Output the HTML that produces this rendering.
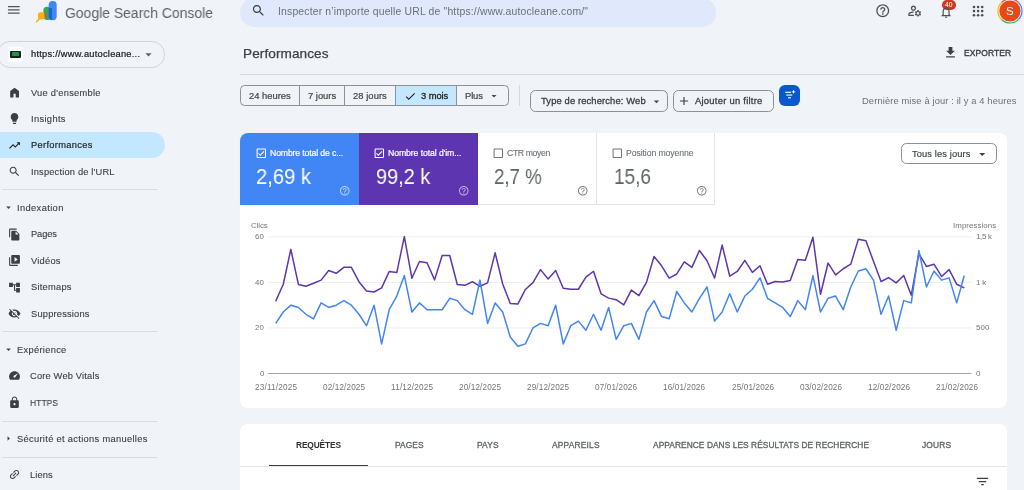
<!DOCTYPE html>
<html lang="fr"><head><meta charset="utf-8"><title>Performances</title>
<style>
html,body{margin:0;padding:0}
html{width:1024px;height:490px;overflow:hidden;background:#f0f4f9}
body{width:1024px;height:490px;overflow:hidden;position:relative;background:#f0f4f9;font-family:"Liberation Sans", sans-serif;}
.t{position:absolute;white-space:pre;will-change:transform;}
.i{position:absolute;display:block;overflow:visible}
.b{position:absolute;box-sizing:border-box}
</style></head><body>

<!-- header -->
<div class="b" style="left:240px;top:-1.6px;width:476px;height:28.3px;border-radius:14.1px;background:#e0e9fb"></div>
<!-- GSC logo -->
<svg class="i" style="left:35px;top:0;width:24px;height:24px" viewBox="0 0 24 24">
<rect x="8.400" y="6.800" width="8" height="13.100" rx="3.600" fill="#34a853"/>
<rect x="13.700" y="1" width="8" height="19.200" rx="3.900" fill="#4285f4"/>
<path d="M13.700 8v8.300a3.900 3.900 0 0 0 3.300 3.850V8z" fill="#1a66d9"/>
<rect x="7.600" y="12.800" width="3.400" height="5.400" rx="1.500" fill="#ea4335"/>
<line x1="1.500" y1="21.700" x2="4.300" y2="18.900" stroke="#fbb216" stroke-width="1.500" stroke-linecap="round"/>
<rect x="2.900" y="12.300" width="6.600" height="7.300" rx="2.700" fill="#fbb216"/>
</svg>
<!-- apps grid -->
<svg class="i" style="left:972.4px;top:4.6px;width:12.2px;height:12.2px" viewBox="0 0 14 14"><g fill="#4d5156">
<circle cx="2.3" cy="2.3" r="1.5"/><circle cx="7" cy="2.3" r="1.5"/><circle cx="11.7" cy="2.3" r="1.5"/>
<circle cx="2.3" cy="7" r="1.5"/><circle cx="7" cy="7" r="1.5"/><circle cx="11.7" cy="7" r="1.5"/>
<circle cx="2.3" cy="11.7" r="1.5"/><circle cx="7" cy="11.7" r="1.5"/><circle cx="11.7" cy="11.7" r="1.5"/></g></svg>
<!-- bell badge -->
<div class="b" style="left:942.1px;top:0.4px;width:14.1px;height:9.4px;border-radius:4.7px;background:#cf3a1f"></div>
<span class="t" style="left:945.3px;top:1.1px;font-size:6.8px;line-height:8px;color:#fff;letter-spacing:-0.1px">40</span>
<!-- avatar -->
<svg class="i" style="left:996.8px;top:-2.2px;width:26px;height:26px" viewBox="0 0 26 26">
<path d="M4.510 4.510 A12 12 0 0 1 21.490 4.510" fill="none" stroke="#ea4335" stroke-width="1.200"/>
<path d="M21.490 4.510 A12 12 0 0 1 21.490 21.490" fill="none" stroke="#4285f4" stroke-width="1.200"/>
<path d="M21.490 21.490 A12 12 0 0 1 4.510 21.490" fill="none" stroke="#34a853" stroke-width="1.200"/>
<path d="M4.510 21.490 A12 12 0 0 1 4.510 4.510" fill="none" stroke="#fbbc04" stroke-width="1.200"/>
<circle cx="13" cy="13" r="10.6" fill="#e64a19"/>
</svg>
<span class="t" style="left:1005.9px;top:4.5px;font-size:11.5px;line-height:13px;color:#fff">S</span>

<!-- property selector -->
<div class="b" style="left:-3.5px;top:41px;width:168.4px;height:26.5px;border-radius:13.25px;border:1px solid #d0d4d9"></div>
<div class="b" style="left:7.5px;top:46.5px;width:15px;height:15px;background:#fff;border-radius:1px"></div>
<div class="b" style="left:10px;top:50.6px;width:10.5px;height:7px;background:#0d2a16;border-radius:1px"></div>
<div class="b" style="left:12px;top:52.3px;width:6.5px;height:3.4px;background:#2e8b4a;border-radius:.5px"></div>

<!-- nav -->
<div class="b" style="left:-14px;top:132px;width:179px;height:26.2px;border-radius:13.1px;background:#c2e7ff"></div>
<div class="b" style="left:1.5px;top:189.3px;width:155.5px;height:1px;background:#d9dde2"></div>
<div class="b" style="left:1.5px;top:331.3px;width:155.5px;height:1px;background:#d9dde2"></div>
<div class="b" style="left:1.5px;top:420.5px;width:155.5px;height:1px;background:#d9dde2"></div>
<div class="b" style="left:1.5px;top:456.6px;width:155.5px;height:1px;background:#d9dde2"></div>
<!-- core web vitals gauge -->
<svg class="i" style="left:7.8px;top:369.1px;width:13px;height:13px" viewBox="0 0 24 24">
<path fill="#3c4043" d="M12 4C6.480 4 2 8.480 2 14c0 1.800.500 3.500 1.350 5 .350.600 1 1 1.700 1h13.900c.700 0 1.350-.400 1.700-1 .850-1.500 1.350-3.200 1.350-5 0-5.520-4.480-10-10-10z"/>
<path fill="#f0f4f9" d="M10.600 15.400a2 2 0 0 0 2.830 0l5.100-7.600-7.930 4.770a2 2 0 0 0 0 2.830z"/>
</svg>

<!-- title row -->
<div class="b" style="left:240px;top:74px;width:784px;height:1px;background:#d5d9de"></div>

<!-- date chips -->
<div class="b" style="left:240.3px;top:85.3px;width:268.4px;height:20.8px;border:1px solid #8d9196;border-radius:4.5px;overflow:hidden">
 <div class="b" style="left:153.8px;top:-1px;width:61.5px;height:21px;background:#c2e7ff"></div>
 <div class="b" style="left:57.5px;top:-1px;width:1px;height:21px;background:#8d9196"></div>
 <div class="b" style="left:102.5px;top:-1px;width:1px;height:21px;background:#8d9196"></div>
 <div class="b" style="left:153.5px;top:-1px;width:1px;height:21px;background:#8d9196"></div>
 <div class="b" style="left:214.5px;top:-1px;width:1px;height:21px;background:#8d9196"></div>
</div>
<div class="b" style="left:519px;top:85px;width:1px;height:21px;background:#d5d9de"></div>
<div class="b" style="left:530.2px;top:90.3px;width:137.4px;height:21.7px;border:1px solid #8d9196;border-radius:5.5px"></div>
<div class="b" style="left:673.2px;top:90.3px;width:100.6px;height:21.7px;border:1px solid #8d9196;border-radius:5.5px"></div>
<div class="b" style="left:779.3px;top:85px;width:21px;height:21.2px;border-radius:6px;background:#0b57d0"></div>
<svg class="i" style="left:783.9px;top:89.3px;width:12px;height:12px" viewBox="0 0 24 24"><g fill="#fff">
<rect x="2.500" y="5.500" width="11.5" height="2.200"/><rect x="4.500" y="11" width="12" height="2.200"/><rect x="8" y="16.500" width="6" height="2.200"/>
<path d="M19 1.500l1.300 2.900 2.900 1.300-2.900 1.300L19 9.900l-1.300-2.900-2.900-1.300 2.900-1.300z"/></g></svg>

<!-- card 1 -->
<div class="b" style="left:240.300px;top:132.600px;width:766.7px;height:275.5px;border-radius:8px;background:#fff;overflow:hidden">
 <div class="b" style="left:0;top:0;width:118.7px;height:72.100px;background:#4285f4"></div>
 <div class="b" style="left:118.7px;top:0;width:118.7px;height:72.100px;background:#5e35b1"></div>
 <div class="b" style="left:237.400px;top:0;width:119.3px;height:72.100px;border-right:1px solid #e3e5e8;border-bottom:1px solid #e3e5e8"></div>
 <div class="b" style="left:356.700px;top:0;width:117.7px;height:72.100px;border-right:1px solid #e3e5e8;border-bottom:1px solid #e3e5e8"></div>
</div>
<div class="b" style="left:900.6px;top:143.1px;width:96px;height:21.1px;border:1px solid #8a8f94;border-radius:5.5px;background:#fff"></div>

<!-- card 2 -->
<div class="b" style="left:240.300px;top:424px;width:766.7px;height:66px;border-radius:8px 8px 0 0;background:#fff"></div>
<div class="b" style="left:240.300px;top:466px;width:766.7px;height:1px;background:#e3e5e8"></div>
<div class="b" style="left:269px;top:464.5px;width:99px;height:1.4px;background:#3c4043"></div>

<svg class="i" style="left:0;top:0;width:1024px;height:490px" viewBox="0 0 1024 490">
<g stroke="#eeeeee" stroke-width="1"><line x1="268" x2="971.5" y1="236.85" y2="236.85"/><line x1="268" x2="971.5" y1="282.4" y2="282.4"/><line x1="268" x2="971.5" y1="327.95" y2="327.95"/></g>
<line x1="268" x2="971.5" y1="373.5" y2="373.5" stroke="#a6a6a6" stroke-width="1"/>
<polyline fill="none" stroke="#5e35b1" stroke-width="1.5" stroke-linejoin="round" points="275.70,301.30 283.27,284.22 290.83,249.38 298.40,284.45 305.97,286.27 313.53,283.31 321.10,280.12 328.67,270.56 336.23,273.29 343.80,267.37 351.37,267.37 358.93,281.72 366.50,291.05 374.07,291.97 381.63,287.87 389.20,271.47 396.77,272.61 404.33,236.62 411.90,278.30 419.47,261.45 427.03,262.81 434.60,279.89 442.17,255.53 449.73,255.53 457.30,284.45 464.87,285.36 472.43,281.72 480.00,286.27 487.57,282.86 495.13,252.79 502.70,283.99 510.27,303.58 517.83,304.04 525.40,289.46 532.97,282.63 540.53,269.65 548.10,278.98 555.67,270.56 563.23,288.32 570.80,289.23 578.37,289.23 585.93,277.16 593.50,271.24 601.07,293.79 608.63,298.11 616.20,299.71 623.77,304.95 631.33,290.14 638.90,295.61 646.47,282.40 654.03,256.44 661.60,265.77 669.17,278.07 676.74,273.97 684.30,261.90 691.87,267.37 699.44,250.52 707.00,260.76 714.57,278.07 722.14,245.05 729.70,276.02 737.27,271.47 744.84,260.31 752.40,272.38 759.97,265.77 767.54,284.22 775.10,281.49 782.67,281.94 790.24,280.58 797.80,259.40 805.37,260.31 812.94,237.31 820.50,294.24 828.07,263.04 835.64,274.88 843.20,268.74 850.77,264.18 858.34,239.36 865.90,240.72 873.47,261.22 881.04,281.49 888.60,277.62 896.17,282.86 903.74,275.57 911.30,295.15 918.87,253.70 926.44,266.46 934.00,264.18 941.57,276.48 949.14,269.65 956.70,284.22 964.27,287.87"/>
<polyline fill="none" stroke="#4285f4" stroke-width="1.5" stroke-linejoin="round" points="275.70,323.39 283.27,312.01 290.83,305.18 298.40,307.45 305.97,314.29 313.53,318.84 321.10,302.90 328.67,307.45 336.23,305.18 343.80,300.62 351.37,305.18 358.93,314.29 366.50,325.67 374.07,305.18 381.63,343.89 389.20,309.73 396.77,296.06 404.33,275.57 411.90,312.01 419.47,302.90 427.03,309.73 434.60,309.73 442.17,309.73 449.73,298.34 457.30,300.62 464.87,309.73 472.43,314.29 480.00,280.12 487.57,323.39 495.13,302.90 502.70,312.01 510.27,337.06 517.83,346.17 525.40,343.89 532.97,327.95 540.53,323.39 548.10,325.67 555.67,305.18 563.23,343.89 570.80,325.67 578.37,321.12 585.93,330.23 593.50,314.29 601.07,330.23 608.63,307.45 616.20,339.34 623.77,325.67 631.33,323.39 638.90,339.34 646.47,312.01 654.03,300.62 661.60,316.56 669.17,318.84 676.74,291.51 684.30,302.90 691.87,312.01 699.44,298.34 707.00,286.96 714.57,321.12 722.14,312.01 729.70,293.79 737.27,312.01 744.84,296.06 752.40,289.23 759.97,277.85 767.54,298.34 775.10,302.90 782.67,307.45 790.24,316.56 797.80,300.62 805.37,309.73 812.94,275.57 820.50,312.01 828.07,298.34 835.64,296.06 843.20,309.73 850.77,286.96 858.34,271.01 865.90,268.74 873.47,280.12 881.04,314.29 888.60,296.06 896.17,330.23 903.74,300.62 911.30,302.90 918.87,250.52 926.44,286.96 934.00,271.01 941.57,280.12 949.14,277.85 956.70,302.90 964.27,275.57"/>
</svg>
<svg class="i" style="left:6.2px;top:2.3px;width:15.6px;height:15.6px;" viewBox="0 0 24 24"><path fill="#50545a" d="M3 18h18v-2H3v2zm0-5h18v-2H3v2zm0-7v2h18V6H3z"/></svg>
<svg class="i" style="left:251.1px;top:3.4px;width:15px;height:15px;" viewBox="0 0 24 24"><path fill="#3c4043" d="M15.5 14h-.79l-.28-.27C15.41 12.59 16 11.11 16 9.5 16 5.91 13.09 3 9.5 3S3 5.91 3 9.5 5.91 16 9.5 16c1.61 0 3.09-.59 4.23-1.57l.27.28v.79l5 4.99L20.49 19l-4.99-5zm-6 0C7.01 14 5 11.99 5 9.5S7.01 5 9.5 5 14 7.01 14 9.5 11.99 14 9.5 14z"/></svg>
<svg class="i" style="left:874.5px;top:2.8px;width:15.5px;height:15.5px;" viewBox="0 0 24 24"><path fill="#4d5156" d="M11 18h2v-2h-2v2zm1-16C6.48 2 2 6.48 2 12s4.48 10 10 10 10-4.48 10-10S17.52 2 12 2zm0 18c-4.41 0-8-3.59-8-8s3.59-8 8-8 8 3.59 8 8-3.59 8-8 8zm0-14c-2.21 0-4 1.79-4 4h2c0-1.1.9-2 2-2s2 .9 2 2c0 2-3 1.75-3 5h2c0-2.25 3-2.5 3-5 0-2.21-1.79-4-4-4z"/></svg>
<svg class="i" style="left:906.8px;top:3.2px;width:15.5px;height:15.5px;" viewBox="0 0 24 24"><path fill="#4d5156" d="M4 18v-.65c0-.34.16-.66.41-.81C6.1 15.53 8.03 15 10 15c.03 0 .05 0 .08.01.1-.7.3-1.37.59-1.98-.22-.02-.44-.03-.67-.03-2.42 0-4.68.67-6.61 1.82-.88.52-1.39 1.5-1.39 2.53V20h9.26c-.42-.6-.75-1.28-.97-2H4zM10 12c2.21 0 4-1.79 4-4s-1.79-4-4-4-4 1.79-4 4 1.79 4 4 4zm0-6c1.1 0 2 .9 2 2s-.9 2-2 2-2-.9-2-2 .9-2 2-2zM20.75 16c0-.22-.03-.42-.06-.63l1.14-1.01-1-1.73-1.45.49c-.32-.27-.68-.48-1.08-.63L18 11h-2l-.3 1.49c-.4.15-.76.36-1.08.63l-1.45-.49-1 1.73 1.14 1.01c-.03.21-.06.41-.06.63s.03.42.06.63l-1.14 1.01 1 1.73 1.45-.49c.32.27.68.48 1.08.63L16 21h2l.3-1.49c.4-.15.76-.36 1.08-.63l1.45.49 1-1.73-1.14-1.01c.03-.21.06-.41.06-.63zM17 18c-1.1 0-2-.9-2-2s.9-2 2-2 2 .9 2 2-.9 2-2 2z"/></svg>
<svg class="i" style="left:939.0px;top:4.7px;width:14.2px;height:14.2px;" viewBox="0 0 24 24"><path fill="#4d5156" d="M12 22c1.1 0 2-.9 2-2h-4c0 1.1.9 2 2 2zm6-6v-5c0-3.07-1.63-5.64-4.5-6.32V4c0-.83-.67-1.5-1.5-1.5s-1.5.67-1.5 1.5v.68C7.64 5.36 6 7.92 6 11v5l-2 2v1h16v-1l-2-2zm-2 1H8v-6c0-2.48 1.51-4.5 4-4.5s4 2.02 4 4.5v6z"/></svg>
<svg class="i" style="left:141.1px;top:46.8px;width:15px;height:15px;" viewBox="0 0 24 24"><path fill="#5f6368" d="M7 10l5 5 5-5z"/></svg>
<svg class="i" style="left:7.8px;top:86.0px;width:13.2px;height:13.2px;" viewBox="0 0 24 24"><path fill="#3c4043" d="M4 21V9l8-6 8 6v12h-6v-7h-4v7H4z"/></svg>
<svg class="i" style="left:7.8px;top:112.3px;width:13px;height:13px;" viewBox="0 0 24 24"><path fill="#3c4043" d="M9 21c0 .55.45 1 1 1h4c.55 0 1-.45 1-1v-1H9v1zm3-19C8.14 2 5 5.14 5 9c0 2.38 1.19 4.47 3 5.740V17c0 .55.45 1 1 1h6c.55 0 1-.45 1-1v-2.26c1.81-1.27 3-3.36 3-5.74 0-3.86-3.14-7-7-7z"/></svg>
<svg class="i" style="left:7.8px;top:138.7px;width:13px;height:13px;" viewBox="0 0 24 24"><path fill="#1f1f1f" d="M16 6l2.29 2.29-4.88 4.88-4-4L2 16.59 3.41 18l6-6 4 4 6.3-6.29L22 12V6z"/></svg>
<svg class="i" style="left:7.8px;top:165.1px;width:13px;height:13px;" viewBox="0 0 24 24"><path fill="#3c4043" d="M15.5 14h-.79l-.28-.27C15.41 12.59 16 11.11 16 9.5 16 5.91 13.09 3 9.5 3S3 5.91 3 9.5 5.91 16 9.5 16c1.61 0 3.09-.59 4.23-1.57l.27.28v.79l5 4.99L20.49 19l-4.99-5zm-6 0C7.01 14 5 11.99 5 9.5S7.01 5 9.5 5 14 7.01 14 9.5 11.99 14 9.5 14z"/></svg>
<svg class="i" style="left:2.5px;top:202.4px;width:11px;height:11px;" viewBox="0 0 24 24"><path fill="#3c4043" d="M7 10l5 5 5-5z"/></svg>
<svg class="i" style="left:7.8px;top:227.6px;width:13px;height:13px;" viewBox="0 0 24 24"><path fill="#3c4043" d="M16 1H4c-1.1 0-2 .9-2 2v14h2V3h12V1zm-1 4l6 6v10c0 1.1-.9 2-2 2H7.99C6.89 23 6 22.1 6 21l.01-14c0-1.1.89-2 1.99-2h7zm-1 7h5.5L14 6.5V12z"/></svg>
<svg class="i" style="left:7.8px;top:254.1px;width:13px;height:13px;" viewBox="0 0 24 24"><path fill="#3c4043" d="M4 6H2v14c0 1.1.9 2 2 2h14v-2H4V6zm16-4H8c-1.1 0-2 .9-2 2v12c0 1.1.9 2 2 2h12c1.1 0 2-.9 2-2V4c0-1.1-.9-2-2-2zm-8 12.5v-9l6 4.5-6 4.500z"/></svg>
<svg class="i" style="left:7.8px;top:280.5px;width:13px;height:13px;" viewBox="0 0 24 24"><path fill="#3c4043" d="M22 11V3h-7v3H9V3H2v8h7V8h2v10h4v3h7v-8h-7v3h-2V8h2v3z"/></svg>
<svg class="i" style="left:7.8px;top:306.8px;width:13px;height:13px;" viewBox="0 0 24 24"><path fill="#3c4043" d="M12 7c2.76 0 5 2.24 5 5 0 .65-.13 1.26-.36 1.83l2.92 2.92c1.51-1.26 2.7-2.89 3.43-4.75-1.73-4.39-6-7.5-11-7.5-1.4 0-2.74.25-3.98.7l2.16 2.16C10.74 7.13 11.35 7 12 7zM2 4.27l2.28 2.28.46.46C3.08 8.3 1.78 10.02 1 12c1.73 4.39 6 7.5 11 7.5 1.55 0 3.03-.3 4.38-.84l.42.42L19.73 22 21 20.73 3.27 3 2 4.27zM7.53 9.8l1.55 1.55c-.05.21-.08.43-.08.65 0 1.66 1.34 3 3 3 .22 0 .44-.03.65-.08l1.55 1.55c-.67.33-1.41.53-2.2.53-2.76 0-5-2.24-5-5 0-.79.2-1.53.53-2.2zm4.31-.78l3.15 3.15.02-.16c0-1.66-1.34-3-3-3l-.17.01z"/></svg>
<svg class="i" style="left:2.5px;top:344.1px;width:11px;height:11px;" viewBox="0 0 24 24"><path fill="#3c4043" d="M7 10l5 5 5-5z"/></svg>
<svg class="i" style="left:7.8px;top:395.8px;width:13px;height:13px;" viewBox="0 0 24 24"><path fill="#3c4043" d="M18 8h-1V6c0-2.76-2.24-5-5-5S7 3.24 7 6v2H6c-1.1 0-2 .9-2 2v10c0 1.1.9 2 2 2h12c1.1 0 2-.9 2-2V10c0-1.1-.9-2-2-2zm-6 9c-1.1 0-2-.9-2-2s.9-2 2-2 2 .9 2 2-.9 2-2 2zm3.1-9H8.9V6c0-1.71 1.39-3.1 3.1-3.1 1.71 0 3.1 1.39 3.1 3.1v2z"/></svg>
<svg class="i" style="left:2.5px;top:433.2px;width:11px;height:11px;" viewBox="0 0 24 24"><path fill="#3c4043" d="M10 17l5-5-5-5v10z"/></svg>
<svg class="i" style="left:7.8px;top:468.3px;width:13px;height:13px;transform:rotate(-45deg);" viewBox="0 0 24 24"><path fill="#3c4043" d="M3.9 12c0-1.71 1.39-3.1 3.1-3.1h4V7H7c-2.76 0-5 2.24-5 5s2.24 5 5 5h4v-1.9H7c-1.71 0-3.1-1.39-3.1-3.1zM8 13h8v-2H8v2zm9-6h-4v1.9h4c1.71 0 3.1 1.39 3.1 3.1s-1.39 3.1-3.1 3.1h-4V17h4c2.76 0 5-2.24 5-5s-2.24-5-5-5z"/></svg>
<svg class="i" style="left:942.8px;top:45.0px;width:15px;height:15px;" viewBox="0 0 24 24"><path fill="#3c4043" d="M19 9h-4V3H9v6H5l7 7 7-7zM5 18v2h14v-2H5z"/></svg>
<svg class="i" style="left:403.5px;top:89.9px;width:12.6px;height:12.6px;" viewBox="0 0 24 24"><path fill="#1f1f1f" d="M9 16.17L4.83 12l-1.42 1.41L9 19 21 7l-1.41-1.41z"/></svg>
<svg class="i" style="left:488.0px;top:90.2px;width:12px;height:12px;" viewBox="0 0 24 24"><path fill="#444746" d="M7 10l5 5 5-5z"/></svg>
<svg class="i" style="left:649.5px;top:94.8px;width:13px;height:13px;" viewBox="0 0 24 24"><path fill="#444746" d="M7 10l5 5 5-5z"/></svg>
<svg class="i" style="left:677.2px;top:94.1px;width:14px;height:14px;" viewBox="0 0 24 24"><path fill="#3c4043" d="M19 13h-6v6h-2v-6H5v-2h6V5h2v6h6v2z"/></svg>
<svg class="i" style="left:975.4px;top:146.8px;width:14.5px;height:14.5px;" viewBox="0 0 24 24"><path fill="#3c4043" d="M7 10l5 5 5-5z"/></svg>
<svg class="i" style="left:254.6px;top:147.2px;width:12.6px;height:12.6px;" viewBox="0 0 24 24"><path fill="#ffffff" d="M19 3H5c-1.1 0-2 .9-2 2v14c0 1.1.9 2 2 2h14c1.1 0 2-.9 2-2V5c0-1.1-.9-2-2-2zm0 16H5V5h14v14zM17.990 9l-1.41-1.42-6.59 6.590-2.58-2.57-1.42 1.41 4 3.99z"/></svg>
<svg class="i" style="left:373.2px;top:147.2px;width:12.6px;height:12.6px;" viewBox="0 0 24 24"><path fill="#ffffff" d="M19 3H5c-1.1 0-2 .9-2 2v14c0 1.1.9 2 2 2h14c1.1 0 2-.9 2-2V5c0-1.1-.9-2-2-2zm0 16H5V5h14v14zM17.990 9l-1.41-1.42-6.59 6.590-2.58-2.57-1.42 1.41 4 3.99z"/></svg>
<svg class="i" style="left:491.9px;top:147.2px;width:12.6px;height:12.6px;" viewBox="0 0 24 24"><path fill="#757575" d="M19 5v14H5V5h14m0-2H5c-1.1 0-2 .9-2 2v14c0 1.1.9 2 2 2h14c1.1 0 2-.9 2-2V5c0-1.1-.9-2-2-2z"/></svg>
<svg class="i" style="left:610.6px;top:147.2px;width:12.6px;height:12.6px;" viewBox="0 0 24 24"><path fill="#757575" d="M19 5v14H5V5h14m0-2H5c-1.1 0-2 .9-2 2v14c0 1.1.9 2 2 2h14c1.1 0 2-.9 2-2V5c0-1.1-.9-2-2-2z"/></svg>
<svg class="i" style="left:339.1px;top:185.3px;width:11.5px;height:11.5px;" viewBox="0 0 24 24"><path fill="rgba(255,255,255,.6)" d="M11 18h2v-2h-2v2zm1-16C6.48 2 2 6.48 2 12s4.48 10 10 10 10-4.48 10-10S17.52 2 12 2zm0 18c-4.41 0-8-3.59-8-8s3.59-8 8-8 8 3.59 8 8-3.59 8-8 8zm0-14c-2.21 0-4 1.79-4 4h2c0-1.1.9-2 2-2s2 .9 2 2c0 2-3 1.75-3 5h2c0-2.25 3-2.5 3-5 0-2.21-1.79-4-4-4z"/></svg>
<svg class="i" style="left:457.9px;top:185.3px;width:11.5px;height:11.5px;" viewBox="0 0 24 24"><path fill="rgba(255,255,255,.6)" d="M11 18h2v-2h-2v2zm1-16C6.48 2 2 6.48 2 12s4.48 10 10 10 10-4.48 10-10S17.52 2 12 2zm0 18c-4.41 0-8-3.59-8-8s3.59-8 8-8 8 3.59 8 8-3.59 8-8 8zm0-14c-2.21 0-4 1.79-4 4h2c0-1.1.9-2 2-2s2 .9 2 2c0 2-3 1.75-3 5h2c0-2.25 3-2.5 3-5 0-2.21-1.79-4-4-4z"/></svg>
<svg class="i" style="left:576.8px;top:185.3px;width:11.5px;height:11.5px;" viewBox="0 0 24 24"><path fill="#80868b" d="M11 18h2v-2h-2v2zm1-16C6.48 2 2 6.48 2 12s4.48 10 10 10 10-4.48 10-10S17.52 2 12 2zm0 18c-4.41 0-8-3.59-8-8s3.59-8 8-8 8 3.59 8 8-3.59 8-8 8zm0-14c-2.21 0-4 1.79-4 4h2c0-1.1.9-2 2-2s2 .9 2 2c0 2-3 1.75-3 5h2c0-2.25 3-2.5 3-5 0-2.21-1.79-4-4-4z"/></svg>
<svg class="i" style="left:695.5px;top:185.3px;width:11.5px;height:11.5px;" viewBox="0 0 24 24"><path fill="#80868b" d="M11 18h2v-2h-2v2zm1-16C6.48 2 2 6.48 2 12s4.48 10 10 10 10-4.48 10-10S17.52 2 12 2zm0 18c-4.41 0-8-3.59-8-8s3.59-8 8-8 8 3.59 8 8-3.59 8-8 8zm0-14c-2.21 0-4 1.79-4 4h2c0-1.1.9-2 2-2s2 .9 2 2c0 2-3 1.75-3 5h2c0-2.25 3-2.5 3-5 0-2.21-1.79-4-4-4z"/></svg>
<svg class="i" style="left:974.8px;top:474.0px;width:15px;height:15px;" viewBox="0 0 24 24"><path fill="#3c4043" d="M10 18h4v-2h-4v2zM3 6v2h18V6H3zm3 7h12v-2H6v2z"/></svg>
<span class="t" style="left:65.0px;top:3.6px;font-size:14.9px;line-height:19.4px;letter-spacing:0.000px;color:#5f6368;transform:scaleX(0.9361);transform-origin:0 50%;">Google Search Console</span>
<span class="t" style="left:278.0px;top:5.1px;font-size:10.4px;line-height:13.5px;letter-spacing:0.174px;color:#6b7075;">Inspecter n’importe quelle URL de &quot;https://www.autocleane.com/&quot;</span>
<span class="t" style="left:31.0px;top:48.2px;font-size:9.3px;line-height:12.1px;letter-spacing:0.235px;color:#202124;-webkit-text-stroke:0.22px #202124;">https://www.autocleane...</span>
<span class="t" style="left:30.5px;top:86.9px;font-size:9.3px;line-height:12.1px;letter-spacing:0.266px;color:#3c4043;-webkit-text-stroke:0.12px #3c4043;">Vue d&#x27;ensemble</span>
<span class="t" style="left:30.5px;top:113.0px;font-size:9.3px;line-height:12.1px;letter-spacing:0.350px;color:#3c4043;-webkit-text-stroke:0.12px #3c4043;">Insights</span>
<span class="t" style="left:30.5px;top:139.3px;font-size:9.3px;line-height:12.1px;letter-spacing:0.330px;color:#1f1f1f;-webkit-text-stroke:0.18px #1f1f1f;">Performances</span>
<span class="t" style="left:30.5px;top:165.8px;font-size:9.3px;line-height:12.1px;letter-spacing:0.176px;color:#3c4043;-webkit-text-stroke:0.12px #3c4043;">Inspection de l&#x27;URL</span>
<span class="t" style="left:17.2px;top:202.1px;font-size:9.3px;line-height:12.1px;letter-spacing:0.377px;color:#3c4043;-webkit-text-stroke:0.12px #3c4043;">Indexation</span>
<span class="t" style="left:30.5px;top:228.3px;font-size:9.3px;line-height:12.1px;letter-spacing:-0.094px;color:#3c4043;-webkit-text-stroke:0.12px #3c4043;">Pages</span>
<span class="t" style="left:30.5px;top:254.8px;font-size:9.3px;line-height:12.1px;letter-spacing:0.247px;color:#3c4043;-webkit-text-stroke:0.12px #3c4043;">Vidéos</span>
<span class="t" style="left:30.5px;top:281.3px;font-size:9.3px;line-height:12.1px;letter-spacing:0.248px;color:#3c4043;-webkit-text-stroke:0.12px #3c4043;">Sitemaps</span>
<span class="t" style="left:30.5px;top:307.6px;font-size:9.3px;line-height:12.1px;letter-spacing:0.196px;color:#3c4043;-webkit-text-stroke:0.12px #3c4043;">Suppressions</span>
<span class="t" style="left:17.2px;top:343.8px;font-size:9.3px;line-height:12.1px;letter-spacing:0.309px;color:#3c4043;-webkit-text-stroke:0.12px #3c4043;">Expérience</span>
<span class="t" style="left:30.4px;top:370.4px;font-size:9.3px;line-height:12.1px;letter-spacing:0.175px;color:#3c4043;-webkit-text-stroke:0.12px #3c4043;">Core Web Vitals</span>
<span class="t" style="left:30.4px;top:396.8px;font-size:9.3px;line-height:12.1px;letter-spacing:0.000px;color:#3c4043;transform:scaleX(0.9185);transform-origin:0 50%;-webkit-text-stroke:0.12px #3c4043;">HTTPS</span>
<span class="t" style="left:17.2px;top:432.9px;font-size:9.3px;line-height:12.1px;letter-spacing:0.316px;color:#3c4043;-webkit-text-stroke:0.12px #3c4043;">Sécurité et actions manuelles</span>
<span class="t" style="left:30.4px;top:469.1px;font-size:9.3px;line-height:12.1px;letter-spacing:0.091px;color:#3c4043;-webkit-text-stroke:0.12px #3c4043;">Liens</span>
<span class="t" style="left:243.0px;top:44.6px;font-size:13.6px;line-height:17.7px;letter-spacing:0.080px;color:#3c4043;-webkit-text-stroke:0.25px #3c4043;">Performances</span>
<span class="t" style="left:963.7px;top:48.1px;font-size:8.5px;line-height:11.1px;letter-spacing:0.070px;color:#3c4043;-webkit-text-stroke:0.35px #3c4043;">EXPORTER</span>
<span class="t" style="left:248.8px;top:89.9px;font-size:9.4px;line-height:12.2px;letter-spacing:-0.000px;color:#444746;-webkit-text-stroke:0.22px #444746;">24 heures</span>
<span class="t" style="left:307.9px;top:89.9px;font-size:9.4px;line-height:12.2px;letter-spacing:-0.007px;color:#444746;-webkit-text-stroke:0.22px #444746;">7 jours</span>
<span class="t" style="left:353.4px;top:89.9px;font-size:9.4px;line-height:12.2px;letter-spacing:0.063px;color:#444746;-webkit-text-stroke:0.22px #444746;">28 jours</span>
<span class="t" style="left:421.0px;top:89.9px;font-size:9.4px;line-height:12.2px;letter-spacing:-0.065px;color:#1f1f1f;-webkit-text-stroke:0.3px #1f1f1f;">3 mois</span>
<span class="t" style="left:464.5px;top:89.9px;font-size:9.4px;line-height:12.2px;letter-spacing:-0.117px;color:#444746;-webkit-text-stroke:0.22px #444746;">Plus</span>
<span class="t" style="left:540.5px;top:95.1px;font-size:9.4px;line-height:12.2px;letter-spacing:0.125px;color:#3c4043;-webkit-text-stroke:0.3px #3c4043;">Type de recherche: Web</span>
<span class="t" style="left:695.4px;top:95.1px;font-size:9.4px;line-height:12.2px;letter-spacing:0.265px;color:#3c4043;-webkit-text-stroke:0.3px #3c4043;">Ajouter un filtre</span>
<span class="t" style="left:862.0px;top:94.8px;font-size:9.3px;line-height:12.1px;letter-spacing:0.139px;color:#6b7075;">Dernière mise à jour : il y a 4 heures</span>
<span class="t" style="left:269.7px;top:147.9px;font-size:8.7px;line-height:11.3px;letter-spacing:-0.143px;color:#ffffff;-webkit-text-stroke:0.2px #ffffff;">Nombre total de c...</span>
<span class="t" style="left:256.4px;top:162.8px;font-size:21.6px;line-height:28.1px;letter-spacing:0.000px;color:#ffffff;transform:scaleX(0.9349);transform-origin:0 50%;">2,69 k</span>
<span class="t" style="left:388.0px;top:147.9px;font-size:8.7px;line-height:11.3px;letter-spacing:-0.092px;color:#ffffff;-webkit-text-stroke:0.2px #ffffff;">Nombre total d&#x27;im...</span>
<span class="t" style="left:375.5px;top:162.8px;font-size:21.6px;line-height:28.1px;letter-spacing:0.000px;color:#ffffff;transform:scaleX(0.9230);transform-origin:0 50%;">99,2 k</span>
<span class="t" style="left:506.7px;top:147.9px;font-size:8.7px;line-height:11.3px;letter-spacing:-0.380px;color:#6b7075;-webkit-text-stroke:0.1px #6b7075;">CTR moyen</span>
<span class="t" style="left:494.0px;top:162.8px;font-size:21.6px;line-height:28.1px;letter-spacing:0.000px;color:#5f6368;transform:scaleX(0.8638);transform-origin:0 50%;">2,7 %</span>
<span class="t" style="left:625.7px;top:147.9px;font-size:8.7px;line-height:11.3px;letter-spacing:-0.098px;color:#6b7075;-webkit-text-stroke:0.1px #6b7075;">Position moyenne</span>
<span class="t" style="left:614.0px;top:162.8px;font-size:21.6px;line-height:28.1px;letter-spacing:0.000px;color:#5f6368;transform:scaleX(0.8803);transform-origin:0 50%;">15,6</span>
<span class="t" style="left:912.0px;top:147.8px;font-size:9.3px;line-height:12.1px;letter-spacing:0.127px;color:#3c4043;-webkit-text-stroke:0.15px #3c4043;">Tous les jours</span>
<span class="t" style="left:251.0px;top:221.3px;font-size:7.9px;line-height:10.3px;letter-spacing:-0.102px;color:#757575;">Clics</span>
<span class="t" style="left:953.0px;top:220.7px;font-size:7.9px;line-height:10.3px;letter-spacing:0.065px;color:#757575;">Impressions</span>
<span class="t" style="left:255.1px;top:232.0px;font-size:7.9px;line-height:10.3px;letter-spacing:0.019px;color:#757575;">60</span>
<span class="t" style="left:255.1px;top:278.0px;font-size:7.9px;line-height:10.3px;letter-spacing:0.019px;color:#757575;">40</span>
<span class="t" style="left:255.1px;top:323.2px;font-size:7.9px;line-height:10.3px;letter-spacing:0.019px;color:#757575;">20</span>
<span class="t" style="left:259.6px;top:368.9px;font-size:7.9px;line-height:10.3px;letter-spacing:-0.091px;color:#757575;">0</span>
<span class="t" style="left:976.3px;top:232.0px;font-size:7.9px;line-height:10.3px;letter-spacing:-0.277px;color:#757575;">1,5 k</span>
<span class="t" style="left:976.3px;top:278.0px;font-size:7.9px;line-height:10.3px;letter-spacing:-0.216px;color:#757575;">1 k</span>
<span class="t" style="left:976.3px;top:323.2px;font-size:7.9px;line-height:10.3px;letter-spacing:0.164px;color:#757575;">500</span>
<span class="t" style="left:976.3px;top:368.9px;font-size:7.9px;line-height:10.3px;letter-spacing:-0.091px;color:#757575;">0</span>
<span class="t" style="left:254.8px;top:382.5px;font-size:8.2px;line-height:10.7px;letter-spacing:0.192px;color:#757575;">23/11/2025</span>
<span class="t" style="left:322.9px;top:382.5px;font-size:8.2px;line-height:10.7px;letter-spacing:0.124px;color:#757575;">02/12/2025</span>
<span class="t" style="left:391.0px;top:382.5px;font-size:8.2px;line-height:10.7px;letter-spacing:0.192px;color:#757575;">11/12/2025</span>
<span class="t" style="left:459.1px;top:382.5px;font-size:8.2px;line-height:10.7px;letter-spacing:0.124px;color:#757575;">20/12/2025</span>
<span class="t" style="left:527.2px;top:382.5px;font-size:8.2px;line-height:10.7px;letter-spacing:0.124px;color:#757575;">29/12/2025</span>
<span class="t" style="left:595.3px;top:382.5px;font-size:8.2px;line-height:10.7px;letter-spacing:0.124px;color:#757575;">07/01/2026</span>
<span class="t" style="left:663.4px;top:382.5px;font-size:8.2px;line-height:10.7px;letter-spacing:0.124px;color:#757575;">16/01/2026</span>
<span class="t" style="left:731.5px;top:382.5px;font-size:8.2px;line-height:10.7px;letter-spacing:0.124px;color:#757575;">25/01/2026</span>
<span class="t" style="left:799.6px;top:382.5px;font-size:8.2px;line-height:10.7px;letter-spacing:0.124px;color:#757575;">03/02/2026</span>
<span class="t" style="left:867.7px;top:382.5px;font-size:8.2px;line-height:10.7px;letter-spacing:0.124px;color:#757575;">12/02/2026</span>
<span class="t" style="left:935.8px;top:382.5px;font-size:8.2px;line-height:10.7px;letter-spacing:0.124px;color:#757575;">21/02/2026</span>
<span class="t" style="left:296.0px;top:440.2px;font-size:8.4px;line-height:10.9px;letter-spacing:-0.154px;color:#303134;font-weight:700;">REQUÊTES</span>
<span class="t" style="left:394.5px;top:440.2px;font-size:8.4px;line-height:10.9px;letter-spacing:0.062px;color:#5f6368;-webkit-text-stroke:0.3px #5f6368;">PAGES</span>
<span class="t" style="left:476.5px;top:440.2px;font-size:8.4px;line-height:10.9px;letter-spacing:0.130px;color:#5f6368;-webkit-text-stroke:0.3px #5f6368;">PAYS</span>
<span class="t" style="left:551.5px;top:440.2px;font-size:8.4px;line-height:10.9px;letter-spacing:0.195px;color:#5f6368;-webkit-text-stroke:0.3px #5f6368;">APPAREILS</span>
<span class="t" style="left:652.5px;top:440.2px;font-size:8.4px;line-height:10.9px;letter-spacing:0.052px;color:#5f6368;-webkit-text-stroke:0.3px #5f6368;">APPARENCE DANS LES RÉSULTATS DE RECHERCHE</span>
<span class="t" style="left:922.0px;top:440.2px;font-size:8.4px;line-height:10.9px;letter-spacing:0.152px;color:#5f6368;-webkit-text-stroke:0.3px #5f6368;">JOURS</span>
</body></html>
